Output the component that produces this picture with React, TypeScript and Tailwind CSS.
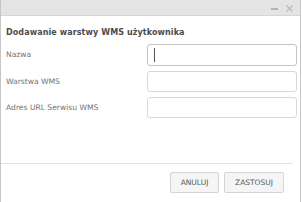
import React from "react";

export default function App() {
  const rows = [
    { label: "Nazwa", focused: true },
    { label: "Warstwa WMS", focused: false },
    { label: "Adres URL Serwisu WMS", focused: false },
  ];
  return (
    <div className="w-[302px] h-[202px] bg-white overflow-hidden font-['DejaVu_Sans',sans-serif]">
      <div className="w-[301px] h-[202px] border-x border-[#c6c6c6] flex flex-col">
        <div className="h-[16px] shrink-0 bg-[#e4e4e4] border-b border-[#d6d6d6] flex items-center justify-end pr-[7px] gap-[8px] text-[#b0b0b0]">
          <div className="w-[7px] h-[2px] bg-[#b4b4b4] mt-[3px]" />
          <svg width="7" height="7" viewBox="0 0 7 7" className="mt-[1px]">
            <path d="M0.5 0.5 L6.5 6.5 M6.5 0.5 L0.5 6.5" stroke="#b8b8b8" strokeWidth="1.1" />
          </svg>
        </div>
        <div className="h-[147px] shrink-0 pl-[5px] pr-[3px] pt-[11px]">
          <div className="text-[8px] leading-[12px] font-bold text-[#4c4c4c] tracking-[0.1px]">
            Dodawanie warstwy WMS użytkownika
          </div>
          <div className="mt-[5px] flex flex-col gap-[5px]">
            {rows.map((r) => (
              <div key={r.label} className="flex items-center justify-between">
                <span className="text-[7.6px] text-[#737373]">{r.label}</span>
                <div
                  className={
                    r.focused
                      ? "w-[150px] h-[22px] rounded-[3px] border border-[#c4c4c4] bg-white flex items-center pl-[6px]"
                      : "w-[150px] h-[21px] rounded-[3px] border border-[#d8d8d8] bg-white"
                  }
                >
                  {r.focused && <span className="block w-px h-[14px] bg-[#555]" />}
                </div>
              </div>
            ))}
          </div>
        </div>
        <div className="h-px bg-[#e2e2e2] mr-[7px] shrink-0" />
        <div className="flex justify-end pr-[16px] pt-[8px] gap-[5px]">
          <button className="w-[49px] h-[21px] rounded-[2px] border border-[#d4d4d4] bg-[#f5f5f5] text-[7.5px] text-[#5a5a5a]">
            ANULUJ
          </button>
          <button className="w-[60px] h-[21px] rounded-[2px] border border-[#d4d4d4] bg-[#f5f5f5] text-[7.5px] text-[#5a5a5a]">
            ZASTOSUJ
          </button>
        </div>
      </div>
    </div>
  );
}
